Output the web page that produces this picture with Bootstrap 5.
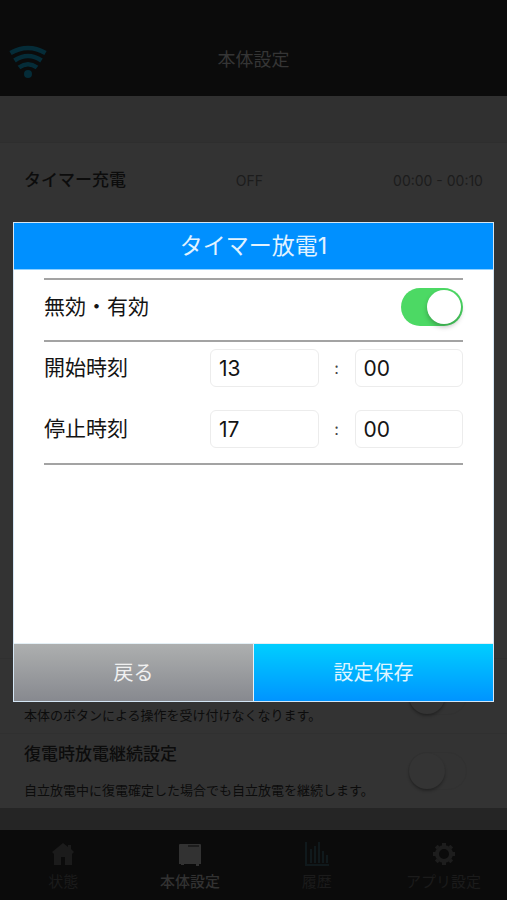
<!DOCTYPE html>
<html lang="ja">
<head>
<meta charset="utf-8">
<meta name="viewport" content="width=device-width, initial-scale=1">
<title>本体設定</title>
<link href="https://cdn.jsdelivr.net/npm/bootstrap@5.3.0/dist/css/bootstrap.min.css" rel="stylesheet">
<style>
  body { font-family: Inter, "Noto Sans CJK JP", sans-serif; background: #333; color: #0c0c0c; }
  .app-header { background: #0b0b0b; color: #353535; height: 96px; padding: 28px 8px 0; }
  .app-header h1 { font-size: 18px; line-height: 24px; padding-bottom: 4px; }
  .header-side { width: 40px; }
  .strip { background: #303030; height: 47px; border-bottom: 1px solid #2e2e2e; }
  .setting-timer { height: 74px; padding: 0 24px; font-size: 14px; color: #1c1c1c; }
  .setting-name { font-size: 17px; line-height: 24px; font-weight: 500; color: #0c0c0c; }
  .setting-row { height: 75px; padding: 0 40px 0 24px; border-top: 1px solid #303030; }
  .setting-note { font-size: 13px; line-height: 20px; color: #0c0c0c; }
  .bottom-gap { background: #252525; height: 22px; }
  .tabs { background: #0b0b0b; height: 70px; }
  .tabs a { color: #1b1b1b; font-size: 15px; line-height: 20px; padding-top: 12px; gap: 6px; }
  .tabs a.current { color: #323232; font-weight: 500; }

  .toggle { appearance: none; flex: none; width: 62px; height: 38px; padding: 2px; margin: 0; border-radius: 19px; background: #4cd964; display: flex; justify-content: flex-end; }
  .toggle::before { content: ""; width: 34px; height: 34px; border-radius: 50%; background: #fff; box-shadow: 0 3px 5px rgba(0,0,0,.25); }
  .toggle-dim { width: 59px; background: #333; border: 1px solid #313131; padding: 0; justify-content: flex-start; }
  .toggle-dim::before { width: 36px; height: 36px; background: #343434; box-shadow: 0 2px 3px rgba(0,0,0,.3); }

  .overlay { padding: 24px 13px 0; }
  .dialog-box { min-height: 480px; background: #fff; border: 1px solid #d4e6f5; }
  .dialog-title { background: #0090ff; color: #e2f3ff; border-bottom: 1px solid #8fd0ff; }
  .dialog-title h2 { font-size: 23px; line-height: 46px; }
  .dialog-content { padding: 8px 30px; font-size: 21px; color: #141414; }
  .rule-row { border-top: 2px solid #a3a3a3; height: 62px; }
  .rule-row .toggle, .rule-row label { margin-bottom: 6px; }
  .times { border-top: 2px solid #a3a3a3; border-bottom: 2px solid #a3a3a3; padding: 7px 0 15px; gap: 23px; }
  .time-inputs { width: 253px; }
  .time-row label { line-height: 38px; }
  .time-inputs input { height: 38px; min-width: 0; border: 1px solid #ececec; border-radius: 6px; padding: 0 8px; font-size: 21px; color: #141414; background: #fff; flex: 1 1 0; }
  .colon { width: 36px; font-size: 16px; color: #444; }
  .dialog-actions { gap: 1px; height: 58px; border-top: 1px solid #e4eff5; background: #e8f2f8; }
  .dialog-actions button { font-size: 20px; border: 0; padding: 0; }
  .back { background: linear-gradient(#adafaf, #87898f); color: #f0f0f0; }
  .save { background: linear-gradient(#00ceff, #0094ff); color: #dff5ff; }
</style>
<script src="https://cdn.jsdelivr.net/npm/bootstrap@5.3.0/dist/js/bootstrap.bundle.min.js"></script>
</head>
<body>
<div class="d-flex flex-column min-vh-100">
  <header class="app-header d-flex align-items-center">
    <div class="header-side">
      <svg class="d-block" width="40" height="36" viewBox="0 0 40 36" fill="none" stroke="#052c38" stroke-width="4.600" aria-hidden="true">
        <path d="M2.500 9Q20-1 37.500 9M6.500 16.500Q20 7.500 33.500 16.500M11 23.500Q20 17 29 23.500"/>
        <circle cx="20" cy="30" r="4" fill="#052c38" stroke="none"/>
      </svg>
    </div>
    <h1 class="flex-fill text-center fw-normal m-0">本体設定</h1>
    <div class="header-side"></div>
  </header>
  <div class="strip"></div>
  <main class="flex-fill d-flex flex-column">
    <div class="setting-timer row g-0 align-items-center">
      <div class="col-4 setting-name">タイマー充電</div>
      <div class="col-4 text-center pe-2">OFF</div>
      <div class="col-4 text-end">00:00 - 00:10</div>
    </div>
    <div class="setting-row mt-auto d-flex align-items-center justify-content-between">
      <label class="setting-note align-self-end mb-2" for="lock">本体のボタンによる操作を受け付けなくなります。</label>
      <input class="toggle toggle-dim" type="checkbox" role="switch" id="lock">
    </div>
    <div class="setting-row d-flex align-items-center justify-content-between">
      <div class="align-self-stretch d-flex flex-column justify-content-between pt-2 pb-2">
        <label class="setting-name" for="keep">復電時放電継続設定</label>
        <span class="setting-note">自立放電中に復電確定した場合でも自立放電を継続します。</span>
      </div>
      <input class="toggle toggle-dim" type="checkbox" role="switch" id="keep">
    </div>
  </main>
  <div class="bottom-gap"></div>
  <nav class="tabs row g-0">
    <a class="col d-flex flex-column align-items-center text-decoration-none" href="#">
      <svg width="24" height="24" viewBox="0 0 24 24" fill="#1b1b1b" aria-hidden="true"><path d="M12 1 1 10l2 2v11h7v-8h4v8h7V12l2-2-3-3V3h-3v2z"/></svg>
      状態
    </a>
    <a class="col d-flex flex-column align-items-center text-decoration-none current" href="#">
      <svg width="24" height="24" viewBox="0 0 24 24" aria-hidden="true"><path fill="#323232" d="M2 2h20q1 0 1 1v19h-2v2h-3v-2H6v1H3v-1H1V3q0-1 1-1z"/><path stroke="#171717" stroke-width="1.500" d="M10 4h11"/></svg>
      本体設定
    </a>
    <a class="col d-flex flex-column align-items-center text-decoration-none" href="#">
      <svg width="24" height="24" viewBox="0 0 24 24" fill="none" stroke="#10191c" stroke-width="2" aria-hidden="true"><path d="M1 0v23h23M6 21V7M10 21V4M14 21V0M18 21V9M22 21v-8"/></svg>
      履歴
    </a>
    <a class="col d-flex flex-column align-items-center text-decoration-none" href="#">
      <svg width="24" height="24" viewBox="0 0 24 24" fill="none" stroke="#1d1d1d" aria-hidden="true"><circle cx="12" cy="12" r="7" stroke-width="4"/><path stroke-width="4" d="M12 1v3M12 20v3M1 12h3M20 12h3M4.200 4.200l2 2M17.800 17.800l2 2M4.200 19.800l2-2M17.800 6.200l2-2"/></svg>
      アプリ設定
    </a>
  </nav>
</div>

<div class="overlay position-fixed top-0 start-0 w-100 h-100 d-flex align-items-center">
  <form class="dialog-box w-100 d-flex flex-column" role="dialog" aria-labelledby="dialog-heading">
    <div class="dialog-title text-center"><h2 class="fw-normal m-0" id="dialog-heading">タイマー放電1</h2></div>
    <div class="dialog-content flex-fill">
      <div class="rule-row d-flex align-items-center justify-content-between">
        <label for="enabled">無効・有効</label>
        <input class="toggle" type="checkbox" role="switch" id="enabled" checked>
      </div>
      <div class="times d-flex flex-column">
        <div class="time-row d-flex justify-content-between">
          <label for="start-hour">開始時刻</label>
          <div class="time-inputs d-flex align-items-center">
            <input type="text" id="start-hour" value="13">
            <span class="colon text-center">:</span>
            <input type="text" aria-label="開始時刻 分" value="00">
          </div>
        </div>
        <div class="time-row d-flex justify-content-between">
          <label for="stop-hour">停止時刻</label>
          <div class="time-inputs d-flex align-items-center">
            <input type="text" id="stop-hour" value="17">
            <span class="colon text-center">:</span>
            <input type="text" aria-label="停止時刻 分" value="00">
          </div>
        </div>
      </div>
    </div>
    <div class="dialog-actions d-flex">
      <button class="back btn rounded-0 w-50" type="button">戻る</button>
      <button class="save btn rounded-0 w-50" type="button">設定保存</button>
    </div>
  </form>
</div>
</body>
</html>
